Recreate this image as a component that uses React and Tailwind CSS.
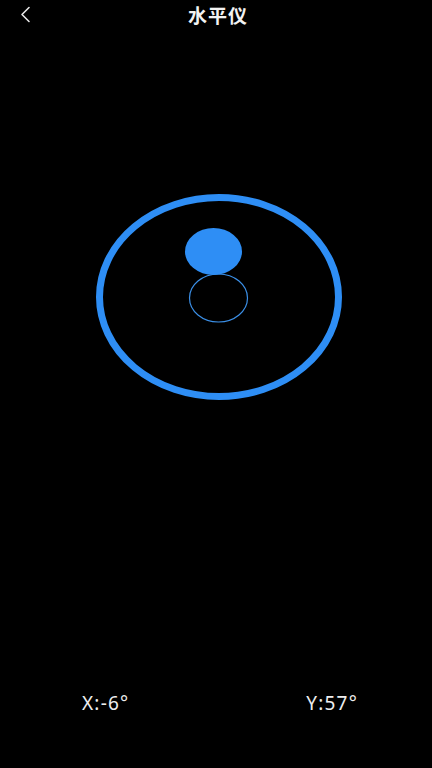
import React from "react";

export default function App() {
  return (
    <div
      className="w-[432px] h-[768px] bg-black text-white flex flex-col overflow-hidden"
      style={{ fontFamily: '"Noto Sans", "Noto Sans CJK SC", sans-serif' }}
    >
      <div className="relative h-[28px] flex items-center justify-center">
        <svg className="absolute left-[19px] top-[6px]" width="12" height="17" viewBox="0 0 12 17">
          <path d="M10 1.5 L3 8.5 L10 15.5" fill="none" stroke="#e5e5e5" strokeWidth="1.6" strokeLinecap="round" strokeLinejoin="round" />
        </svg>
        <span className="text-[19px] font-bold leading-none tracking-[1px] text-[#f2f2f2] ml-[4px]" style={{ fontFamily: '"Noto Sans CJK SC", sans-serif' }}>
          水平仪
        </span>
      </div>
      <div className="mt-[162px] h-[220px]">
        <svg width="432" height="220" viewBox="0 0 432 220">
          <ellipse cx="219" cy="107" rx="119.5" ry="99.5" fill="none" stroke="#2e8ef5" strokeWidth="7" />
          <ellipse cx="218.5" cy="108" rx="29" ry="24" fill="none" stroke="#3b8fe6" strokeWidth="1.2" />
          <ellipse cx="213.5" cy="61.5" rx="28.5" ry="23.5" fill="#2e8ef5" />
        </svg>
      </div>
      <div className="mt-auto mb-[53px] flex justify-between pl-[82px] pr-[74px] text-[19px] leading-[24px] tracking-[1.2px] text-[#eeeeee]">
        <span>X:-6°</span>
        <span>Y:57°</span>
      </div>
    </div>
  );
}
